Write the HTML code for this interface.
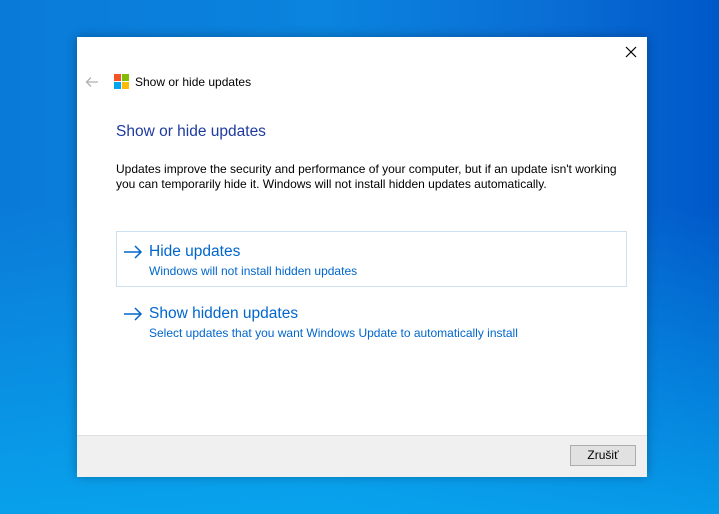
<!DOCTYPE html>
<html><head><style>
html,body{margin:0;padding:0;width:719px;height:514px;overflow:hidden}
body{position:relative;font-family:"Liberation Sans",sans-serif;
background:linear-gradient(90deg,#0a7ad8 0%,#0a84de 45%,#0a6fd6 75%,#0058c8 100%)}
.bgb{position:absolute;left:0;top:0;width:719px;height:514px;background:linear-gradient(180deg,rgba(10,160,236,0) 0%,rgba(10,160,236,0) 40%,rgba(8,170,240,.8) 100%)}
.win{position:absolute;left:77px;top:37px;width:570px;height:439px;background:#fff;box-shadow:0 0 10px rgba(0,0,0,.3)}
.foot{position:absolute;left:0;top:398px;width:570px;height:41px;background:#f0f0f0;border-top:1px solid #dfdfdf}
.btn{position:absolute;left:493px;top:9px;width:64px;height:19px;border:1px solid #adadad;background:#e1e1e1;font-size:12px;text-align:center;line-height:19px;color:#000}
.t{position:absolute;white-space:nowrap}
</style></head><body>
<div class="bgb"></div>
<div class="win">
<svg class="t" style="left:548px;top:9px" width="12" height="12"><path d="M1 1L11 11M11 1L1 11" stroke="#000" stroke-width="1.2"/></svg>
<svg class="t" style="left:8px;top:39px" width="14" height="12"><path d="M13 6H2M6 1.5L1.5 6L6 10.5" stroke="#b0b0b0" stroke-width="1.3" fill="none"/></svg>
<div class="t" style="left:37px;top:37px;width:7px;height:7px;background:#f35325"></div>
<div class="t" style="left:45px;top:37px;width:7px;height:7px;background:#81bc06"></div>
<div class="t" style="left:37px;top:45px;width:7px;height:7px;background:#05a6f0"></div>
<div class="t" style="left:45px;top:45px;width:7px;height:7px;background:#ffba08"></div>
<div class="t" style="left:58px;top:38px;font-size:12px;color:#000">Show or hide updates</div>
<div class="t" style="left:39px;top:86px;font-size:15.5px;color:#1e3a9e">Show or hide updates</div>
<div class="t" style="left:39px;top:125px;font-size:12px;line-height:15px;color:#000">Updates improve the security and performance of your computer, but if an update isn't working<br>you can temporarily hide it. Windows will not install hidden updates automatically.</div>
<div class="t" style="left:39px;top:194px;width:509px;height:54px;border:1px solid #cde0f0"></div>
<svg class="t" style="left:46px;top:208px" width="20" height="14"><path d="M1 7H18M12 1L18 7L12 13" stroke="#0066cc" stroke-width="1.5" fill="none"/></svg>
<div class="t" style="left:72px;top:206px;font-size:15.5px;color:#0066cc">Hide updates</div>
<div class="t" style="left:72px;top:227px;font-size:12px;color:#0066cc">Windows will not install hidden updates</div>
<svg class="t" style="left:46px;top:270px" width="20" height="14"><path d="M1 7H18M12 1L18 7L12 13" stroke="#0066cc" stroke-width="1.5" fill="none"/></svg>
<div class="t" style="left:72px;top:268px;font-size:15.5px;color:#0066cc">Show hidden updates</div>
<div class="t" style="left:72px;top:289px;font-size:12px;color:#0066cc">Select updates that you want Windows Update to automatically install</div>
<div class="foot"><div class="btn">Zrušiť</div></div>
</div>
</body></html>
